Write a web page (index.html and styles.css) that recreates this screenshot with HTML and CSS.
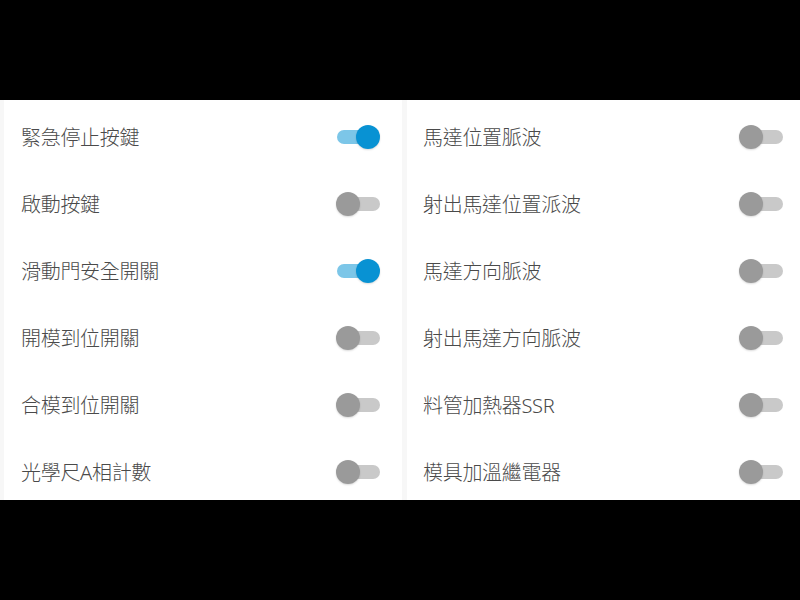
FILE: index.html
```html
<!DOCTYPE html>
<html lang="zh-Hant">
<head>
<meta charset="utf-8">
<link rel="stylesheet" href="styles.css">
</head>
<body>
<div class="screen">
  <div class="panel">
    <div class="card card-left">
      <div class="row"><span class="label">緊急停止按鍵</span><span class="switch on"><span class="track"></span><span class="thumb"></span></span></div>
      <div class="row"><span class="label">啟動按鍵</span><span class="switch"><span class="track"></span><span class="thumb"></span></span></div>
      <div class="row"><span class="label">滑動門安全開關</span><span class="switch on"><span class="track"></span><span class="thumb"></span></span></div>
      <div class="row"><span class="label">開模到位開關</span><span class="switch"><span class="track"></span><span class="thumb"></span></span></div>
      <div class="row"><span class="label">合模到位開關</span><span class="switch"><span class="track"></span><span class="thumb"></span></span></div>
      <div class="row"><span class="label">光學尺A相計數</span><span class="switch"><span class="track"></span><span class="thumb"></span></span></div>
    </div>
    <div class="card card-right">
      <div class="row"><span class="label">馬達位置脈波</span><span class="switch"><span class="track"></span><span class="thumb"></span></span></div>
      <div class="row"><span class="label">射出馬達位置派波</span><span class="switch"><span class="track"></span><span class="thumb"></span></span></div>
      <div class="row"><span class="label">馬達方向脈波</span><span class="switch"><span class="track"></span><span class="thumb"></span></span></div>
      <div class="row"><span class="label">射出馬達方向脈波</span><span class="switch"><span class="track"></span><span class="thumb"></span></span></div>
      <div class="row"><span class="label">料管加熱器SSR</span><span class="switch"><span class="track"></span><span class="thumb"></span></span></div>
      <div class="row"><span class="label">模具加溫繼電器</span><span class="switch"><span class="track"></span><span class="thumb"></span></span></div>
    </div>
  </div>
</div>
</body>
</html>
```
FILE: styles.css
```css
html, body {
  margin: 0;
  padding: 0;
  background: #000;
  width: 800px;
  height: 600px;
  overflow: hidden;
}
.screen {
  padding-top: 100px;
  height: 500px;
  box-sizing: border-box;
}
.panel {
  height: 400px;
  background: #f7f7f7;
  display: flex;
  gap: 5px;
  padding-left: 4px;
  overflow: hidden;
  width: 810px;
  box-sizing: border-box;
}
.card {
  background: #fff;
  padding-top: 3px;
  box-sizing: border-box;
  height: 420px;
}
.card-left {
  width: 398px;
  padding-left: 17px;
  padding-right: 22px;
}
.card-right {
  width: 398px;
  padding-left: 16px;
  padding-right: 22px;
}
.row {
  height: 67px;
  display: flex;
  align-items: center;
  justify-content: space-between;
}
.label {
  font-family: "Noto Sans", "Noto Sans CJK TC", sans-serif;
  font-size: 20px;
  font-weight: 300;
  color: #4a4a4a;
  letter-spacing: -0.3px;
}
.switch {
  position: relative;
  width: 44px;
  height: 26px;
  display: block;
}
.track {
  position: absolute;
  left: 1px;
  right: 0;
  top: 6px;
  height: 14px;
  border-radius: 7px;
  background: #c9c9c9;
}
.thumb {
  position: absolute;
  top: 1px;
  left: 0;
  width: 24px;
  height: 24px;
  border-radius: 50%;
  background: #9a9a9a;
  box-shadow: 0 1px 2px rgba(0,0,0,0.15);
}
.switch.on .track {
  background: #7cc6e8;
  right: 4px;
}
.switch.on .thumb {
  left: 20px;
  background: #0892d3;
}
```
